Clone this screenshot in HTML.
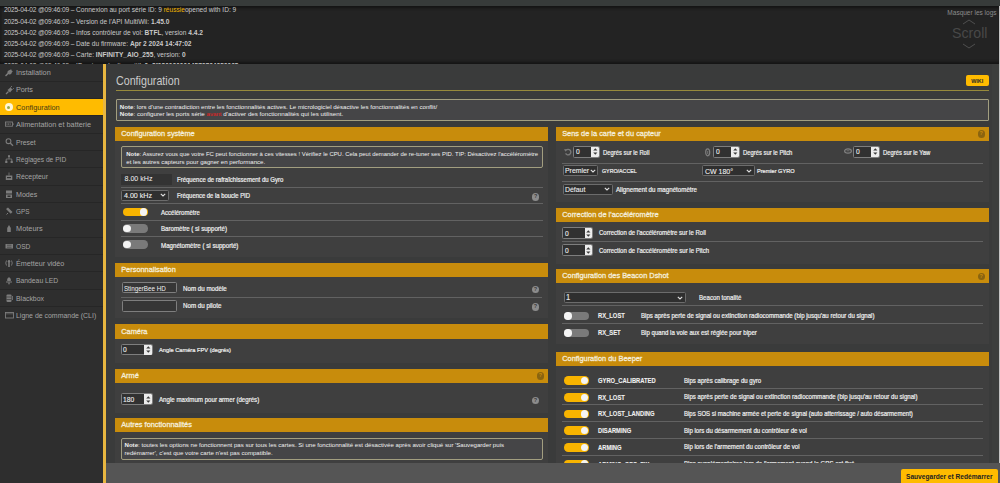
<!DOCTYPE html><html><head><meta charset="utf-8"><style>
html,body{margin:0;padding:0;width:1000px;height:483px;overflow:hidden;background:#3a3b3b;font-family:"Liberation Sans",sans-serif;}
div{position:absolute;box-sizing:border-box;}
.t{white-space:pre;}
</style></head><body>
<div style="left:0px;top:0px;width:1000px;height:6px;background:#373b3a;"></div>
<div style="left:0px;top:6px;width:1000px;height:57.5px;background:#232323;box-shadow:inset 0 3px 3px -1px #141414, inset 0 -3px 3px -1px #141414"></div>
<div style="left:0;top:6px;width:1000px;height:57.5px;overflow:hidden">
<div class="t" style="left:4px;top:0.40px;font-size:6.6px;line-height:8px;color:#c9c9c9"><span style="letter-spacing:-0.14px">2025-04-02 @09:46:09 – </span>Connexion au port série ID: 9 <span style="color:#f0b400">réussie</span>opened with ID: 9</div>
<div class="t" style="left:4px;top:11.50px;font-size:6.6px;line-height:8px;color:#c9c9c9"><span style="letter-spacing:-0.14px">2025-04-02 @09:46:09 – </span>Version de l'API MultiWii: <b>1.45.0</b></div>
<div class="t" style="left:4px;top:22.60px;font-size:6.6px;line-height:8px;color:#c9c9c9"><span style="letter-spacing:-0.14px">2025-04-02 @09:46:09 – </span>Infos contrôleur de vol: <b>BTFL</b>, version <b>4.4.2</b></div>
<div class="t" style="left:4px;top:33.70px;font-size:6.6px;line-height:8px;color:#c9c9c9"><span style="letter-spacing:-0.14px">2025-04-02 @09:46:09 – </span>Date du firmware: <b>Apr 2 2024 14:47:02</b></div>
<div class="t" style="left:4px;top:44.80px;font-size:6.6px;line-height:8px;color:#c9c9c9"><span style="letter-spacing:-0.14px">2025-04-02 @09:46:09 – </span>Carte: <b>INFINITY_AIO_255</b>, version: <b>0</b></div>
<div class="t" style="left:4px;top:55.90px;font-size:6.6px;line-height:8px;color:#c9c9c9"><span style="letter-spacing:-0.14px">2025-04-02 @09:46:09 – </span>ID unique du dispositif: <b>0x8f0800300014573734353035</b></div>
</div>
<div class="t" style="left:940px;top:8.70px;font-size:6.500px;line-height:7.800px;color:#8c8c8c;font-weight:normal;width:56.5px;text-align:right">Masquer les logs</div>
<div class="t" style="left:952px;top:24.68px;font-size:14.200px;line-height:17.040px;color:#484848;font-weight:normal;">Scroll</div>
<svg style="position:absolute;left:962px;top:19px" width="14" height="6"><polyline points="1,5 7,1 13,5" fill="none" stroke="#4f4f4f" stroke-width="1"/></svg>
<svg style="position:absolute;left:962px;top:43px" width="14" height="6"><polyline points="1,1 7,5 13,1" fill="none" stroke="#4f4f4f" stroke-width="1"/></svg>
<div style="left:0px;top:63.5px;width:103px;height:420px;background:#2e2e2e;"></div>
<div class="t" style="left:16px;top:69.11px;font-size:7.260px;line-height:8.712px;color:#a4a4a4;font-weight:normal;">Installation</div>
<svg style="position:absolute;left:3.5px;top:67.47px" width="10" height="10" viewBox="0 0 10 10"><path d="M2,8.5 L6,4.5" stroke="#7c7c7c" stroke-width="1.6" stroke-linecap="round"/><path d="M5.2,3.2 A2.2,2.2 0 1 0 7.8,5.6 L8.8,4.2 L7.6,3.6 L7.2,2.2 Z" fill="#7c7c7c"/></svg>
<div style="left:0px;top:80.63px;width:103px;height:1px;background:#262626;"></div>
<div class="t" style="left:16px;top:86.45px;font-size:7.240px;line-height:8.688px;color:#a4a4a4;font-weight:normal;">Ports</div>
<svg style="position:absolute;left:3.5px;top:84.79px" width="10" height="10" viewBox="0 0 10 10"><path d="M2,9 L4.5,6.5" stroke="#7c7c7c" stroke-width="1.2"/><path d="M3.5,5 L6.5,2.5 L8.5,4.5 L6,7.5 Z" fill="#7c7c7c"/><path d="M6.5,2.5 L8,1 M8.5,4.5 L9.8,3.2" stroke="#7c7c7c" stroke-width="0.9"/></svg>
<div style="left:0px;top:98.46px;width:103px;height:17.33px;background:#ffbb00;"></div>
<div style="left:0px;top:97.96px;width:103px;height:1px;background:#262626;"></div>
<div class="t" style="left:16px;top:103.72px;font-size:7.350px;line-height:8.820px;color:#4a3a12;font-weight:normal;">Configuration</div>
<div style="left:4.7px;top:103.12px;width:8px;height:8px;border-radius:50%;background:#fff7d6"></div>
<div style="left:7.2px;top:105.62px;width:3px;height:3px;border-radius:50%;background:#9aa84a"></div>
<div style="left:0px;top:115.28999999999999px;width:103px;height:1px;background:#262626;"></div>
<div class="t" style="left:16px;top:121.06px;font-size:7.330px;line-height:8.796px;color:#a4a4a4;font-weight:normal;">Alimentation et batterie</div>
<svg style="position:absolute;left:3.5px;top:119.45px" width="10" height="10" viewBox="0 0 10 10"><rect x="1.5" y="3" width="7" height="4.2" fill="none" stroke="#7c7c7c" stroke-width="0.9"/><rect x="8.5" y="4.2" width="1" height="1.8" fill="#7c7c7c"/><path d="M3,4.2 v1.8 M4.6,4.2 v1.8 M6.2,4.2 v1.8" stroke="#7c7c7c" stroke-width="0.7"/></svg>
<div style="left:0px;top:132.62px;width:103px;height:1px;background:#262626;"></div>
<div class="t" style="left:16px;top:138.72px;font-size:6.780px;line-height:8.136px;color:#a4a4a4;font-weight:normal;">Preset</div>
<svg style="position:absolute;left:3.5px;top:136.78px" width="10" height="10" viewBox="0 0 10 10"><circle cx="4.5" cy="4.2" r="2.4" fill="none" stroke="#7c7c7c" stroke-width="1.1"/><path d="M6.2,6 L9,8.8" stroke="#7c7c7c" stroke-width="1.4"/></svg>
<div style="left:0px;top:149.95px;width:103px;height:1px;background:#262626;"></div>
<div class="t" style="left:16px;top:156.12px;font-size:6.650px;line-height:7.980px;color:#a4a4a4;font-weight:normal;">Réglages de PID</div>
<svg style="position:absolute;left:3.5px;top:154.11px" width="10" height="10" viewBox="0 0 10 10"><rect x="4" y="1.2" width="2" height="2" fill="#7c7c7c"/><path d="M5,3 v2 M2.2,7 v-2 h5.6 v2" fill="none" stroke="#7c7c7c" stroke-width="0.8"/><rect x="1.2" y="6.8" width="2.2" height="2.2" fill="#7c7c7c"/><rect x="6.6" y="6.8" width="2.2" height="2.2" fill="#7c7c7c"/></svg>
<div style="left:0px;top:167.27999999999997px;width:103px;height:1px;background:#262626;"></div>
<div class="t" style="left:16px;top:173.29px;font-size:6.930px;line-height:8.316px;color:#a4a4a4;font-weight:normal;">Récepteur</div>
<svg style="position:absolute;left:3.5px;top:171.44px" width="10" height="10" viewBox="0 0 10 10"><rect x="1.8" y="4.5" width="6.5" height="4.5" fill="#7c7c7c"/><path d="M5,4.5 v-3" stroke="#7c7c7c" stroke-width="0.8"/><rect x="3" y="6" width="4" height="1.2" fill="#2e2e2e"/></svg>
<div style="left:0px;top:184.60999999999999px;width:103px;height:1px;background:#262626;"></div>
<div class="t" style="left:16px;top:190.52px;font-size:7.090px;line-height:8.508px;color:#a4a4a4;font-weight:normal;">Modes</div>
<svg style="position:absolute;left:3.5px;top:188.77px" width="10" height="10" viewBox="0 0 10 10"><rect x="2" y="1.5" width="6" height="3" fill="#7c7c7c"/><rect x="2" y="5.5" width="6" height="3.5" fill="#7c7c7c"/><rect x="3.5" y="6.5" width="3" height="1.5" fill="#2e2e2e"/></svg>
<div style="left:0px;top:201.94px;width:103px;height:1px;background:#262626;"></div>
<div class="t" style="left:16px;top:208.26px;font-size:6.400px;line-height:7.680px;color:#a4a4a4;font-weight:normal;">GPS</div>
<svg style="position:absolute;left:3.5px;top:206.10px" width="10" height="10" viewBox="0 0 10 10"><path d="M2,3 L4,1.5 L8.5,6 L6.8,7.8 Z" fill="#7c7c7c"/><path d="M2.5,8.5 L4,7" stroke="#7c7c7c" stroke-width="1"/></svg>
<div style="left:0px;top:219.26999999999998px;width:103px;height:1px;background:#262626;"></div>
<div class="t" style="left:16px;top:225.00px;font-size:7.390px;line-height:8.868px;color:#a4a4a4;font-weight:normal;">Moteurs</div>
<svg style="position:absolute;left:3.5px;top:223.43px" width="10" height="10" viewBox="0 0 10 10"><path d="M3.2,9 L3.2,5 L5,2 L6.8,5 L6.8,9 Z" fill="#7c7c7c"/></svg>
<div style="left:0px;top:236.59999999999997px;width:103px;height:1px;background:#262626;"></div>
<div class="t" style="left:16px;top:242.80px;font-size:6.600px;line-height:7.920px;color:#a4a4a4;font-weight:normal;">OSD</div>
<svg style="position:absolute;left:3.5px;top:240.76px" width="10" height="10" viewBox="0 0 10 10"><rect x="1.5" y="3" width="7.5" height="4.5" fill="#7c7c7c"/><path d="M3,4.2 h4.5 M3,6.2 h4.5" stroke="#2e2e2e" stroke-width="0.6"/></svg>
<div style="left:0px;top:253.93px;width:103px;height:1px;background:#262626;"></div>
<div class="t" style="left:16px;top:259.78px;font-size:7.190px;line-height:8.628px;color:#a4a4a4;font-weight:normal;">Émetteur vidéo</div>
<svg style="position:absolute;left:3.5px;top:258.10px" width="10" height="10" viewBox="0 0 10 10"><path d="M2.5,2.5 Q1,5 2.5,7.5 M7.5,2.5 Q9,5 7.5,7.5" fill="none" stroke="#7c7c7c" stroke-width="0.9"/><rect x="4.2" y="3" width="1.6" height="6" fill="#7c7c7c"/><circle cx="5" cy="3.2" r="1.2" fill="#7c7c7c"/></svg>
<div style="left:0px;top:271.26px;width:103px;height:1px;background:#262626;"></div>
<div class="t" style="left:16px;top:277.35px;font-size:6.790px;line-height:8.148px;color:#a4a4a4;font-weight:normal;">Bandeau LED</div>
<svg style="position:absolute;left:3.5px;top:275.43px" width="10" height="10" viewBox="0 0 10 10"><path d="M3.2,6 L3.2,4 Q5,0.5 6.8,4 L6.8,6 Z" fill="#7c7c7c"/><rect x="2" y="6.5" width="6" height="1" fill="#7c7c7c"/><rect x="4.3" y="7.5" width="1.4" height="1.8" fill="#7c7c7c"/></svg>
<div style="left:0px;top:288.59px;width:103px;height:1px;background:#262626;"></div>
<div class="t" style="left:16px;top:294.62px;font-size:6.900px;line-height:8.280px;color:#a4a4a4;font-weight:normal;">Blackbox</div>
<svg style="position:absolute;left:3.5px;top:292.75px" width="10" height="10" viewBox="0 0 10 10"><rect x="2.5" y="1.5" width="5" height="7.5" rx="1" fill="#7c7c7c"/><path d="M2.5,4 h5 M2.5,6.5 h5" stroke="#2e2e2e" stroke-width="0.6"/><rect x="8.2" y="3" width="0.8" height="4" fill="#7c7c7c"/></svg>
<div style="left:0px;top:305.91999999999996px;width:103px;height:1px;background:#262626;"></div>
<div class="t" style="left:16px;top:311.92px;font-size:6.940px;line-height:8.328px;color:#a4a4a4;font-weight:normal;">Ligne de commande (CLI)</div>
<svg style="position:absolute;left:3.5px;top:310.08px" width="10" height="10" viewBox="0 0 10 10"><rect x="1.5" y="2.5" width="8" height="5.5" fill="none" stroke="#7c7c7c" stroke-width="0.9"/><path d="M1.5,3.8 h8" stroke="#7c7c7c" stroke-width="0.6"/></svg>
<div style="left:103px;top:63.5px;width:3px;height:420px;background:#e8b640;"></div>
<div style="left:992px;top:63.5px;width:6.5px;height:400px;background:#3c3e3d;"></div>
<div style="left:998.5px;top:6px;width:1.5px;height:457px;background:#c4c4c4;"></div>
<div class="t" style="left:116px;top:74.58px;font-size:10.700px;line-height:12.840px;color:#cacaca;font-weight:normal;transform:scaleY(1.12);transform-origin:0 50%">Configuration</div>
<div style="left:116px;top:90px;width:873px;height:1.2px;background:#978a3c;"></div>
<div style="left:965.5px;top:75px;width:23.5px;height:11.2px;background:#ffbb00;border-radius:2px"></div>
<div class="t" style="left:965.5px;top:77.56px;font-size:5.400px;line-height:6.480px;color:#2a2a2a;font-weight:bold;width:23.5px;text-align:center">WIKI</div>
<div style="left:116px;top:99.3px;width:873px;height:21.3px;background:#454547;border:1px solid #a29e80;border-radius:1px"></div>
<div class="t" style="left:119.8px;top:102.53px;font-size:6.120px;line-height:7.344px;color:#f0f0f0;font-weight:normal;"><b>Note</b>: lors d'une contradiction entre les fonctionnalités actives. Le micrologiciel désactive les fonctionnalités en conflit/</div>
<div class="t" style="left:119.8px;top:110.48px;font-size:6.200px;line-height:7.440px;color:#f0f0f0;font-weight:normal;"><b>Note</b>: configurer les ports série <span style="color:#e82020">avant</span> d'activer des fonctionnalités qui les utilisent.</div>
<div style="left:115.4px;top:141.1px;width:432.6px;height:116.4px;background:#3f3f3f;"></div>
<div style="left:115.4px;top:126.8px;width:432.6px;height:14.299999999999997px;background:#c88c0c;"></div>
<div class="t" style="left:121.2px;top:130.21px;font-size:7.400px;line-height:8.880px;color:#f4ecd8;font-weight:normal;-webkit-text-stroke:0.3px #f4ecd8;">Configuration système</div>
<div style="left:121.1px;top:146.3px;width:421.5px;height:21.8px;background:#454547;border:1px solid #a29e80;border-radius:2px"></div>
<div class="t" style="left:126.3px;top:150.84px;font-size:5.930px;line-height:7.116px;color:#f0f0f0;font-weight:normal;"><b>Note</b>: Assurez vous que votre FC peut fonctionner à ces vitesses ! Vérifiez le CPU. Cela peut demander de re-tuner ses PID. TIP: Désactivez l'accéléromètre</div>
<div class="t" style="left:126.3px;top:158.04px;font-size:6.100px;line-height:7.320px;color:#f0f0f0;font-weight:normal;">et les autres capteurs pour gagner en performance.</div>
<div style="left:121.3px;top:174px;width:51.2px;height:10.5px;background:#333333;"></div>
<div class="t" style="left:124.5px;top:174.94px;font-size:7.100px;line-height:8.520px;color:#f4f4f4;font-weight:normal;">8.00 kHz</div>
<div class="t" style="left:177.2px;top:175.89px;font-size:6.512px;line-height:7.815px;color:#f0f0f0;font-weight:normal;transform:scaleX(0.9259);transform-origin:0 50%;-webkit-text-stroke:0.2px #f0f0f0;">Fréquence de rafraîchissement du Gyro</div>
<div style="left:121px;top:186.5px;width:422px;height:1px;background:#626262;"></div>
<div style="left:121.3px;top:189.70px;width:47.5px;height:11px;background:#2f2f2f;border:1px solid #6c6c6c;border-radius:1.5px"></div>
<div class="t" style="left:123.6px;top:191.30px;font-size:7.668px;line-height:9.202px;color:#f0f0f0;font-weight:normal;transform:scaleX(0.9259);transform-origin:0 50%;-webkit-text-stroke:0.1px #f0f0f0;">4.00 kHz</div>
<svg style="position:absolute;left:159.80px;top:193.20px" width="6" height="4"><polyline points="0.8,0.8 3,3 5.2,0.8" fill="none" stroke="#e0e0e0" stroke-width="1.1"/></svg>
<div class="t" style="left:177.2px;top:191.98px;font-size:6.372px;line-height:7.646px;color:#f0f0f0;font-weight:normal;transform:scaleX(0.9259);transform-origin:0 50%;-webkit-text-stroke:0.2px #f0f0f0;">Fréquence de la boucle PID</div>
<div style="left:532.10px;top:193.40px;width:7.2px;height:7.2px;border-radius:50%;background:#8c8c8c"></div>
<div class="t" style="left:532.10px;top:193.40px;width:7.2px;height:7.2px;font-size:5.5px;line-height:7.2px;text-align:center;font-weight:bold;color:#3a3a3a">?</div>
<div style="left:121px;top:202.7px;width:422px;height:1px;background:#626262;"></div>
<div style="left:122.8px;top:207.75px;width:25px;height:8.5px;border-radius:4.25px;background:#f8b400"></div>
<div style="left:139.80px;top:208.25px;width:7.5px;height:7.5px;border-radius:50%;background:#f4f4f4"></div>
<div class="t" style="left:160.9px;top:209.00px;font-size:6.502px;line-height:7.802px;color:#f0f0f0;font-weight:normal;transform:scaleX(0.9259);transform-origin:0 50%;-webkit-text-stroke:0.2px #f0f0f0;">Accéléromètre</div>
<div style="left:121px;top:219.8px;width:422px;height:1px;background:#626262;"></div>
<div style="left:122.8px;top:224.15px;width:25px;height:8.5px;border-radius:4.25px;background:#7a7a7a"></div>
<div style="left:123.30px;top:224.65px;width:7.5px;height:7.5px;border-radius:50%;background:#f4f4f4"></div>
<div class="t" style="left:160.9px;top:225.23px;font-size:6.620px;line-height:7.944px;color:#f0f0f0;font-weight:normal;transform:scaleX(0.9259);transform-origin:0 50%;-webkit-text-stroke:0.2px #f0f0f0;">Baromètre ( si supporté)</div>
<div style="left:121px;top:235.8px;width:422px;height:1px;background:#626262;"></div>
<div style="left:122.8px;top:240.45px;width:25px;height:8.5px;border-radius:4.25px;background:#7a7a7a"></div>
<div style="left:123.30px;top:240.95px;width:7.5px;height:7.5px;border-radius:50%;background:#f4f4f4"></div>
<div class="t" style="left:160.9px;top:241.50px;font-size:6.674px;line-height:8.009px;color:#f0f0f0;font-weight:normal;transform:scaleX(0.9259);transform-origin:0 50%;-webkit-text-stroke:0.2px #f0f0f0;">Magnétomètre ( si supporté)</div>
<div style="left:115.4px;top:277.2px;width:432.6px;height:41.10000000000002px;background:#3f3f3f;"></div>
<div style="left:115.4px;top:262.7px;width:432.6px;height:14.5px;background:#c88c0c;"></div>
<div class="t" style="left:121.2px;top:266.21px;font-size:7.400px;line-height:8.880px;color:#f4ecd8;font-weight:normal;-webkit-text-stroke:0.3px #f4ecd8;">Personnalisation</div>
<div style="left:121.5px;top:282.10px;width:55.6px;height:11.4px;background:#363636;border:1px solid #7e7e7e;border-radius:1.5px"></div>
<div class="t" style="left:123.9px;top:284.52px;font-size:6.300px;line-height:7.560px;color:#f0f0f0;font-weight:normal;">StingerBee HD</div>
<div class="t" style="left:182.6px;top:284.58px;font-size:6.696px;line-height:8.035px;color:#f0f0f0;font-weight:normal;transform:scaleX(0.9259);transform-origin:0 50%;-webkit-text-stroke:0.2px #f0f0f0;">Nom du modèle</div>
<div style="left:531.80px;top:286.10px;width:7.2px;height:7.2px;border-radius:50%;background:#8c8c8c"></div>
<div class="t" style="left:531.80px;top:286.10px;width:7.2px;height:7.2px;font-size:5.5px;line-height:7.2px;text-align:center;font-weight:bold;color:#3a3a3a">?</div>
<div style="left:121px;top:296.9px;width:421px;height:1px;background:#626262;"></div>
<div style="left:121.5px;top:300.20px;width:55.6px;height:11.4px;background:#363636;border:1px solid #7e7e7e;border-radius:1.5px"></div>
<div class="t" style="left:182.6px;top:301.76px;font-size:6.739px;line-height:8.087px;color:#f0f0f0;font-weight:normal;transform:scaleX(0.9259);transform-origin:0 50%;-webkit-text-stroke:0.2px #f0f0f0;">Nom du pilote</div>
<div style="left:531.80px;top:303.40px;width:7.2px;height:7.2px;border-radius:50%;background:#8c8c8c"></div>
<div class="t" style="left:531.80px;top:303.40px;width:7.2px;height:7.2px;font-size:5.5px;line-height:7.2px;text-align:center;font-weight:bold;color:#3a3a3a">?</div>
<div style="left:115.4px;top:338.6px;width:432.6px;height:24.69999999999999px;background:#3f3f3f;"></div>
<div style="left:115.4px;top:324.1px;width:432.6px;height:14.5px;background:#c88c0c;"></div>
<div class="t" style="left:121.2px;top:327.61px;font-size:7.400px;line-height:8.880px;color:#f4ecd8;font-weight:normal;-webkit-text-stroke:0.3px #f4ecd8;">Caméra</div>
<div style="left:121px;top:344.00px;width:31.7px;height:11.4px;background:#313131;border:1px solid #7e7e7e;border-radius:1.5px"></div>
<div class="t" style="left:123.2px;top:346.28px;font-size:7.035px;line-height:8.442px;color:#f4f4f4;font-weight:normal;transform:scaleX(0.9524);transform-origin:0 50%;-webkit-text-stroke:0.1px #f4f4f4;">0</div>
<div style="left:144.10px;top:344.80px;width:7.8px;height:9.8px;background:#ececec;border-radius:0 1px 1px 0"></div>
<svg style="position:absolute;left:145.70px;top:345.20px" width="5" height="9" viewBox="0 0 5 9"><polygon points="0.2,3.6 2.3,1.2 4.4,3.6" fill="#3a3a3a"/><polygon points="0.2,5.4 2.3,7.8 4.4,5.4" fill="#3a3a3a"/></svg>
<div class="t" style="left:158.8px;top:346.49px;font-size:6.178px;line-height:7.413px;color:#f0f0f0;font-weight:normal;transform:scaleX(0.9259);transform-origin:0 50%;-webkit-text-stroke:0.2px #f0f0f0;">Angle Caméra FPV (degrés)</div>
<div style="left:115.4px;top:383px;width:432.6px;height:30px;background:#3f3f3f;"></div>
<div style="left:115.4px;top:369px;width:432.6px;height:14px;background:#c88c0c;"></div>
<div class="t" style="left:121.2px;top:372.26px;font-size:7.400px;line-height:8.880px;color:#f4ecd8;font-weight:normal;-webkit-text-stroke:0.3px #f4ecd8;">Armé</div>
<div style="left:536.90px;top:372.40px;width:7.2px;height:7.2px;border-radius:50%;background:#8a6410"></div>
<div class="t" style="left:536.90px;top:372.40px;width:7.2px;height:7.2px;font-size:5.5px;line-height:7.2px;text-align:center;font-weight:bold;color:#c88c0c">?</div>
<div style="left:121px;top:393.30px;width:31.7px;height:11.4px;background:#313131;border:1px solid #7e7e7e;border-radius:1.5px"></div>
<div class="t" style="left:123.2px;top:395.58px;font-size:7.035px;line-height:8.442px;color:#f4f4f4;font-weight:normal;transform:scaleX(0.9524);transform-origin:0 50%;-webkit-text-stroke:0.1px #f4f4f4;">180</div>
<div style="left:144.10px;top:394.10px;width:7.8px;height:9.8px;background:#ececec;border-radius:0 1px 1px 0"></div>
<svg style="position:absolute;left:145.70px;top:394.50px" width="5" height="9" viewBox="0 0 5 9"><polygon points="0.2,3.6 2.3,1.2 4.4,3.6" fill="#3a3a3a"/><polygon points="0.2,5.4 2.3,7.8 4.4,5.4" fill="#3a3a3a"/></svg>
<div class="t" style="left:158.8px;top:395.61px;font-size:6.642px;line-height:7.970px;color:#f0f0f0;font-weight:normal;transform:scaleX(0.9259);transform-origin:0 50%;-webkit-text-stroke:0.2px #f0f0f0;">Angle maximum pour armer (degrés)</div>
<div style="left:531.80px;top:397.20px;width:7.2px;height:7.2px;border-radius:50%;background:#8c8c8c"></div>
<div class="t" style="left:531.80px;top:397.20px;width:7.2px;height:7.2px;font-size:5.5px;line-height:7.2px;text-align:center;font-weight:bold;color:#3a3a3a">?</div>
<div style="left:115.4px;top:432.3px;width:432.6px;height:37.69999999999999px;background:#3f3f3f;"></div>
<div style="left:115.4px;top:417.8px;width:432.6px;height:14.5px;background:#c88c0c;"></div>
<div class="t" style="left:121.2px;top:421.31px;font-size:7.400px;line-height:8.880px;color:#f4ecd8;font-weight:normal;-webkit-text-stroke:0.3px #f4ecd8;">Autres fonctionnalités</div>
<div style="left:121.1px;top:437.8px;width:422px;height:21.9px;background:#454547;border:1px solid #a29e80;border-radius:2px"></div>
<div class="t" style="left:124.5px;top:441.14px;font-size:6.100px;line-height:7.320px;color:#f0f0f0;font-weight:normal;"><b>Note</b>: toutes les options ne fonctionnent pas sur tous les cartes. Si une fonctionnalité est désactivée après avoir cliqué sur 'Sauvegarder puis</div>
<div class="t" style="left:124.5px;top:449.14px;font-size:6.100px;line-height:7.320px;color:#f0f0f0;font-weight:normal;">redémarrer', c'est que votre carte n'est pas compatible.</div>
<div style="left:556.4px;top:141.1px;width:432.30000000000007px;height:61.20000000000002px;background:#3f3f3f;"></div>
<div style="left:556.4px;top:126.8px;width:432.30000000000007px;height:14.299999999999997px;background:#c88c0c;"></div>
<div class="t" style="left:562.1999999999999px;top:130.21px;font-size:7.400px;line-height:8.880px;color:#f4ecd8;font-weight:normal;-webkit-text-stroke:0.3px #f4ecd8;">Sens de la carte et du capteur</div>
<div style="left:977.60px;top:130.35px;width:7.2px;height:7.2px;border-radius:50%;background:#8a6410"></div>
<div class="t" style="left:977.60px;top:130.35px;width:7.2px;height:7.2px;font-size:5.5px;line-height:7.2px;text-align:center;font-weight:bold;color:#c88c0c">?</div>
<svg style="position:absolute;left:563.80px;top:147.5px" width="8" height="8" viewBox="0 0 8 8"><path d="M2,2.2 A2.8,2.8 0 1 1 1.6,5.4" fill="none" stroke="#7a7a7a" stroke-width="1.3"/><polygon points="0.2,1 3.2,1.4 1.2,3.8" fill="#7a7a7a"/></svg>
<div style="left:573.4px;top:146.20px;width:26.3px;height:11.4px;background:#313131;border:1px solid #7e7e7e;border-radius:1.5px"></div>
<div class="t" style="left:575.6px;top:148.48px;font-size:7.035px;line-height:8.442px;color:#f4f4f4;font-weight:normal;transform:scaleX(0.9524);transform-origin:0 50%;-webkit-text-stroke:0.1px #f4f4f4;">0</div>
<div style="left:591.10px;top:147.00px;width:7.8px;height:9.8px;background:#ececec;border-radius:0 1px 1px 0"></div>
<svg style="position:absolute;left:592.70px;top:147.40px" width="5" height="9" viewBox="0 0 5 9"><polygon points="0.2,3.6 2.3,1.2 4.4,3.6" fill="#3a3a3a"/><polygon points="0.2,5.4 2.3,7.8 4.4,5.4" fill="#3a3a3a"/></svg>
<div class="t" style="left:602.8px;top:148.50px;font-size:6.329px;line-height:7.595px;color:#f0f0f0;font-weight:normal;transform:scaleX(0.9259);transform-origin:0 50%;-webkit-text-stroke:0.2px #f0f0f0;">Degrés sur le Roll</div>
<svg style="position:absolute;left:705.20px;top:147.5px" width="6" height="9" viewBox="0 0 6 9"><ellipse cx="2.7" cy="4.3" rx="2.0" ry="3.5" fill="none" stroke="#808080" stroke-width="1.2"/><path d="M2.7,3 v3" stroke="#808080" stroke-width="0.8"/></svg>
<div style="left:713.4px;top:146.20px;width:26.3px;height:11.4px;background:#313131;border:1px solid #7e7e7e;border-radius:1.5px"></div>
<div class="t" style="left:715.6px;top:148.48px;font-size:7.035px;line-height:8.442px;color:#f4f4f4;font-weight:normal;transform:scaleX(0.9524);transform-origin:0 50%;-webkit-text-stroke:0.1px #f4f4f4;">0</div>
<div style="left:731.10px;top:147.00px;width:7.8px;height:9.8px;background:#ececec;border-radius:0 1px 1px 0"></div>
<svg style="position:absolute;left:732.70px;top:147.40px" width="5" height="9" viewBox="0 0 5 9"><polygon points="0.2,3.6 2.3,1.2 4.4,3.6" fill="#3a3a3a"/><polygon points="0.2,5.4 2.3,7.8 4.4,5.4" fill="#3a3a3a"/></svg>
<div class="t" style="left:742.8px;top:148.50px;font-size:6.329px;line-height:7.595px;color:#f0f0f0;font-weight:normal;transform:scaleX(0.9259);transform-origin:0 50%;-webkit-text-stroke:0.2px #f0f0f0;">Degrés sur le Pitch</div>
<svg style="position:absolute;left:843.80px;top:148px" width="9" height="6" viewBox="0 0 9 6"><ellipse cx="4" cy="3" rx="3.4" ry="2.1" fill="none" stroke="#808080" stroke-width="1.2"/><path d="M2.5,2.8 h3" stroke="#808080" stroke-width="0.8"/></svg>
<div style="left:853.4px;top:146.20px;width:26.3px;height:11.4px;background:#313131;border:1px solid #7e7e7e;border-radius:1.5px"></div>
<div class="t" style="left:855.6px;top:148.48px;font-size:7.035px;line-height:8.442px;color:#f4f4f4;font-weight:normal;transform:scaleX(0.9524);transform-origin:0 50%;-webkit-text-stroke:0.1px #f4f4f4;">0</div>
<div style="left:871.10px;top:147.00px;width:7.8px;height:9.8px;background:#ececec;border-radius:0 1px 1px 0"></div>
<svg style="position:absolute;left:872.70px;top:147.40px" width="5" height="9" viewBox="0 0 5 9"><polygon points="0.2,3.6 2.3,1.2 4.4,3.6" fill="#3a3a3a"/><polygon points="0.2,5.4 2.3,7.8 4.4,5.4" fill="#3a3a3a"/></svg>
<div class="t" style="left:882.8px;top:148.50px;font-size:6.329px;line-height:7.595px;color:#f0f0f0;font-weight:normal;transform:scaleX(0.9259);transform-origin:0 50%;-webkit-text-stroke:0.2px #f0f0f0;">Degrés sur le Yaw</div>
<div style="left:561.8px;top:162.7px;width:421.70000000000005px;height:1px;background:#626262;"></div>
<div style="left:562.7px;top:165.40px;width:35.8px;height:11px;background:#2f2f2f;border:1px solid #6c6c6c;border-radius:1.5px"></div>
<div class="t" style="left:565.0px;top:167.13px;font-size:7.452px;line-height:8.942px;color:#f0f0f0;font-weight:normal;transform:scaleX(0.9259);transform-origin:0 50%;-webkit-text-stroke:0.1px #f0f0f0;">Premier</div>
<svg style="position:absolute;left:589.50px;top:168.90px" width="6" height="4"><polyline points="0.8,0.8 3,3 5.2,0.8" fill="none" stroke="#e0e0e0" stroke-width="1.1"/></svg>
<div class="t" style="left:602px;top:168.27px;font-size:5.724px;line-height:6.869px;color:#f0f0f0;font-weight:normal;transform:scaleX(0.9259);transform-origin:0 50%;-webkit-text-stroke:0.2px #f0f0f0;">GYRO/ACCEL</div>
<div style="left:702.4px;top:165.40px;width:52.2px;height:11px;background:#2f2f2f;border:1px solid #6c6c6c;border-radius:1.5px"></div>
<div class="t" style="left:704.6999999999999px;top:167.06px;font-size:7.560px;line-height:9.072px;color:#f0f0f0;font-weight:normal;transform:scaleX(0.9259);transform-origin:0 50%;-webkit-text-stroke:0.1px #f0f0f0;">CW 180°</div>
<svg style="position:absolute;left:745.60px;top:168.90px" width="6" height="4"><polyline points="0.8,0.8 3,3 5.2,0.8" fill="none" stroke="#e0e0e0" stroke-width="1.1"/></svg>
<div class="t" style="left:756.8px;top:168.07px;font-size:6.048px;line-height:7.258px;color:#f0f0f0;font-weight:normal;transform:scaleX(0.9259);transform-origin:0 50%;-webkit-text-stroke:0.2px #f0f0f0;">Premier GYRO</div>
<div style="left:561.8px;top:181.1px;width:421.70000000000005px;height:1px;background:#626262;"></div>
<div style="left:562.7px;top:183.80px;width:50.7px;height:11px;background:#2f2f2f;border:1px solid #6c6c6c;border-radius:1.5px"></div>
<div class="t" style="left:565.0px;top:185.53px;font-size:7.452px;line-height:8.942px;color:#f0f0f0;font-weight:normal;transform:scaleX(0.9259);transform-origin:0 50%;-webkit-text-stroke:0.1px #f0f0f0;">Défaut</div>
<svg style="position:absolute;left:604.40px;top:187.30px" width="6" height="4"><polyline points="0.8,0.8 3,3 5.2,0.8" fill="none" stroke="#e0e0e0" stroke-width="1.1"/></svg>
<div class="t" style="left:616.4px;top:185.89px;font-size:6.685px;line-height:8.022px;color:#f0f0f0;font-weight:normal;transform:scaleX(0.9259);transform-origin:0 50%;-webkit-text-stroke:0.2px #f0f0f0;">Alignement du magnétomètre</div>
<div style="left:556.4px;top:222px;width:432.30000000000007px;height:41.5px;background:#3f3f3f;"></div>
<div style="left:556.4px;top:207.9px;width:432.30000000000007px;height:14.099999999999994px;background:#c88c0c;"></div>
<div class="t" style="left:562.1999999999999px;top:211.21px;font-size:7.400px;line-height:8.880px;color:#f4ecd8;font-weight:normal;-webkit-text-stroke:0.3px #f4ecd8;">Correction de l'accéléromètre</div>
<div style="left:562.4px;top:227.40px;width:30.7px;height:11.4px;background:#313131;border:1px solid #7e7e7e;border-radius:1.5px"></div>
<div class="t" style="left:564.6px;top:229.68px;font-size:7.035px;line-height:8.442px;color:#f4f4f4;font-weight:normal;transform:scaleX(0.9524);transform-origin:0 50%;-webkit-text-stroke:0.1px #f4f4f4;">0</div>
<div style="left:584.50px;top:228.20px;width:7.8px;height:9.8px;background:#ececec;border-radius:0 1px 1px 0"></div>
<svg style="position:absolute;left:586.10px;top:228.60px" width="5" height="9" viewBox="0 0 5 9"><polygon points="0.2,3.6 2.3,1.2 4.4,3.6" fill="#3a3a3a"/><polygon points="0.2,5.4 2.3,7.8 4.4,5.4" fill="#3a3a3a"/></svg>
<div class="t" style="left:599.2px;top:229.49px;font-size:6.512px;line-height:7.815px;color:#f0f0f0;font-weight:normal;transform:scaleX(0.9259);transform-origin:0 50%;-webkit-text-stroke:0.2px #f0f0f0;">Correction de l'accéléromètre sur le Roll</div>
<div style="left:561.8px;top:240.9px;width:421.70000000000005px;height:1px;background:#626262;"></div>
<div style="left:562.4px;top:244.40px;width:30.7px;height:11.4px;background:#313131;border:1px solid #7e7e7e;border-radius:1.5px"></div>
<div class="t" style="left:564.6px;top:246.68px;font-size:7.035px;line-height:8.442px;color:#f4f4f4;font-weight:normal;transform:scaleX(0.9524);transform-origin:0 50%;-webkit-text-stroke:0.1px #f4f4f4;">0</div>
<div style="left:584.50px;top:245.20px;width:7.8px;height:9.8px;background:#ececec;border-radius:0 1px 1px 0"></div>
<svg style="position:absolute;left:586.10px;top:245.60px" width="5" height="9" viewBox="0 0 5 9"><polygon points="0.2,3.6 2.3,1.2 4.4,3.6" fill="#3a3a3a"/><polygon points="0.2,5.4 2.3,7.8 4.4,5.4" fill="#3a3a3a"/></svg>
<div class="t" style="left:599.2px;top:246.88px;font-size:6.534px;line-height:7.841px;color:#f0f0f0;font-weight:normal;transform:scaleX(0.9259);transform-origin:0 50%;-webkit-text-stroke:0.2px #f0f0f0;">Correction de l'accéléromètre sur le Pitch</div>
<div style="left:556.4px;top:283.3px;width:432.30000000000007px;height:60.69999999999999px;background:#3f3f3f;"></div>
<div style="left:556.4px;top:269px;width:432.30000000000007px;height:14.300000000000011px;background:#c88c0c;"></div>
<div class="t" style="left:562.1999999999999px;top:272.41px;font-size:7.400px;line-height:8.880px;color:#f4ecd8;font-weight:normal;-webkit-text-stroke:0.3px #f4ecd8;">Configuration des Beacon Dshot</div>
<div style="left:977.60px;top:272.55px;width:7.2px;height:7.2px;border-radius:50%;background:#8a6410"></div>
<div class="t" style="left:977.60px;top:272.55px;width:7.2px;height:7.2px;font-size:5.5px;line-height:7.2px;text-align:center;font-weight:bold;color:#c88c0c">?</div>
<div style="left:564px;top:292.10px;width:122px;height:11px;background:#2f2f2f;border:1px solid #6c6c6c;border-radius:1.5px"></div>
<div class="t" style="left:566.3px;top:293.38px;font-size:8.208px;line-height:9.850px;color:#f0f0f0;font-weight:normal;transform:scaleX(0.9259);transform-origin:0 50%;-webkit-text-stroke:0.1px #f0f0f0;">1</div>
<svg style="position:absolute;left:677.00px;top:295.60px" width="6" height="4"><polyline points="0.8,0.8 3,3 5.2,0.8" fill="none" stroke="#e0e0e0" stroke-width="1.1"/></svg>
<div class="t" style="left:698.6px;top:294.31px;font-size:6.642px;line-height:7.970px;color:#f0f0f0;font-weight:normal;transform:scaleX(0.9259);transform-origin:0 50%;-webkit-text-stroke:0.2px #f0f0f0;">Beacon tonalité</div>
<div style="left:561.8px;top:304.8px;width:421.70000000000005px;height:1px;background:#626262;"></div>
<div style="left:563.6px;top:311.85px;width:25px;height:8.5px;border-radius:4.25px;background:#7a7a7a"></div>
<div style="left:564.10px;top:312.35px;width:7.5px;height:7.5px;border-radius:50%;background:#f4f4f4"></div>
<div class="t" style="left:597.6px;top:312.12px;font-size:6.635px;line-height:7.962px;color:#f0f0f0;font-weight:bold;transform:scaleX(0.8772);transform-origin:0 50%;-webkit-text-stroke:0.1px #f0f0f0;">RX_LOST</div>
<div class="t" style="left:641.2px;top:311.85px;font-size:6.588px;line-height:7.906px;color:#f0f0f0;font-weight:normal;transform:scaleX(0.9259);transform-origin:0 50%;-webkit-text-stroke:0.2px #f0f0f0;">Bips après perte de signal ou extinction radiocommande (bip jusqu'au retour du signal)</div>
<div style="left:561.8px;top:323.4px;width:421.70000000000005px;height:1px;background:#626262;"></div>
<div style="left:563.6px;top:328.55px;width:25px;height:8.5px;border-radius:4.25px;background:#7a7a7a"></div>
<div style="left:564.10px;top:329.05px;width:7.5px;height:7.5px;border-radius:50%;background:#f4f4f4"></div>
<div class="t" style="left:597.6px;top:328.82px;font-size:6.635px;line-height:7.962px;color:#f0f0f0;font-weight:bold;transform:scaleX(0.8772);transform-origin:0 50%;-webkit-text-stroke:0.1px #f0f0f0;">RX_SET</div>
<div class="t" style="left:641.2px;top:328.55px;font-size:6.588px;line-height:7.906px;color:#f0f0f0;font-weight:normal;transform:scaleX(0.9259);transform-origin:0 50%;-webkit-text-stroke:0.2px #f0f0f0;">Bip quand la voie aux est réglée pour biper</div>
<div style="left:556.4px;top:365.7px;width:432.30000000000007px;height:104.30000000000001px;background:#3f3f3f;"></div>
<div style="left:556.4px;top:352.1px;width:432.30000000000007px;height:13.599999999999966px;background:#c88c0c;"></div>
<div class="t" style="left:562.1999999999999px;top:355.16px;font-size:7.400px;line-height:8.880px;color:#f4ecd8;font-weight:normal;-webkit-text-stroke:0.3px #f4ecd8;">Configuration du Beeper</div>
<div style="left:563.6px;top:376.35px;width:25px;height:8.5px;border-radius:4.25px;background:#f8b400"></div>
<div style="left:580.60px;top:376.85px;width:7.5px;height:7.5px;border-radius:50%;background:#f4f4f4"></div>
<div class="t" style="left:597.6px;top:377.02px;font-size:6.635px;line-height:7.962px;color:#f0f0f0;font-weight:bold;transform:scaleX(0.8772);transform-origin:0 50%;-webkit-text-stroke:0.1px #f0f0f0;">GYRO_CALIBRATED</div>
<div class="t" style="left:683.7px;top:376.55px;font-size:6.588px;line-height:7.906px;color:#f0f0f0;font-weight:normal;transform:scaleX(0.9259);transform-origin:0 50%;-webkit-text-stroke:0.2px #f0f0f0;">Bips après calibrage du gyro</div>
<div style="left:561.8px;top:387.70000000000005px;width:421.70000000000005px;height:1px;background:#626262;"></div>
<div style="left:563.6px;top:393.05px;width:25px;height:8.5px;border-radius:4.25px;background:#f8b400"></div>
<div style="left:580.60px;top:393.55px;width:7.5px;height:7.5px;border-radius:50%;background:#f4f4f4"></div>
<div class="t" style="left:597.6px;top:393.72px;font-size:6.635px;line-height:7.962px;color:#f0f0f0;font-weight:bold;transform:scaleX(0.8772);transform-origin:0 50%;-webkit-text-stroke:0.1px #f0f0f0;">RX_LOST</div>
<div class="t" style="left:683.7px;top:393.25px;font-size:6.588px;line-height:7.906px;color:#f0f0f0;font-weight:normal;transform:scaleX(0.9259);transform-origin:0 50%;-webkit-text-stroke:0.2px #f0f0f0;">Bips après perte de signal ou extinction radiocommande (bip jusqu'au retour du signal)</div>
<div style="left:561.8px;top:404.40000000000003px;width:421.70000000000005px;height:1px;background:#626262;"></div>
<div style="left:563.6px;top:409.75px;width:25px;height:8.5px;border-radius:4.25px;background:#f8b400"></div>
<div style="left:580.60px;top:410.25px;width:7.5px;height:7.5px;border-radius:50%;background:#f4f4f4"></div>
<div class="t" style="left:597.6px;top:410.42px;font-size:6.635px;line-height:7.962px;color:#f0f0f0;font-weight:bold;transform:scaleX(0.8772);transform-origin:0 50%;-webkit-text-stroke:0.1px #f0f0f0;">RX_LOST_LANDING</div>
<div class="t" style="left:683.7px;top:410.00px;font-size:6.502px;line-height:7.802px;color:#f0f0f0;font-weight:normal;transform:scaleX(0.9259);transform-origin:0 50%;-webkit-text-stroke:0.2px #f0f0f0;">Bips SOS si machine armée et perte de signal (auto atterrissage / auto désarmement)</div>
<div style="left:561.8px;top:421.1px;width:421.70000000000005px;height:1px;background:#626262;"></div>
<div style="left:563.6px;top:426.45px;width:25px;height:8.5px;border-radius:4.25px;background:#f8b400"></div>
<div style="left:580.60px;top:426.95px;width:7.5px;height:7.5px;border-radius:50%;background:#f4f4f4"></div>
<div class="t" style="left:597.6px;top:427.12px;font-size:6.635px;line-height:7.962px;color:#f0f0f0;font-weight:bold;transform:scaleX(0.8772);transform-origin:0 50%;-webkit-text-stroke:0.1px #f0f0f0;">DISARMING</div>
<div class="t" style="left:683.7px;top:426.65px;font-size:6.588px;line-height:7.906px;color:#f0f0f0;font-weight:normal;transform:scaleX(0.9259);transform-origin:0 50%;-webkit-text-stroke:0.2px #f0f0f0;">Bip lors du désarmement du contrôleur de vol</div>
<div style="left:561.8px;top:437.80000000000007px;width:421.70000000000005px;height:1px;background:#626262;"></div>
<div style="left:563.6px;top:443.15px;width:25px;height:8.5px;border-radius:4.25px;background:#f8b400"></div>
<div style="left:580.60px;top:443.65px;width:7.5px;height:7.5px;border-radius:50%;background:#f4f4f4"></div>
<div class="t" style="left:597.6px;top:443.82px;font-size:6.635px;line-height:7.962px;color:#f0f0f0;font-weight:bold;transform:scaleX(0.8772);transform-origin:0 50%;-webkit-text-stroke:0.1px #f0f0f0;">ARMING</div>
<div class="t" style="left:683.7px;top:443.35px;font-size:6.588px;line-height:7.906px;color:#f0f0f0;font-weight:normal;transform:scaleX(0.9259);transform-origin:0 50%;-webkit-text-stroke:0.2px #f0f0f0;">Bip lors de l'armement du contrôleur de vol</div>
<div style="left:561.8px;top:454.50000000000006px;width:421.70000000000005px;height:1px;background:#626262;"></div>
<div style="left:563.6px;top:459.85px;width:25px;height:8.5px;border-radius:4.25px;background:#f8b400"></div>
<div style="left:580.60px;top:460.35px;width:7.5px;height:7.5px;border-radius:50%;background:#f4f4f4"></div>
<div class="t" style="left:597.6px;top:460.52px;font-size:6.635px;line-height:7.962px;color:#f0f0f0;font-weight:bold;transform:scaleX(0.8772);transform-origin:0 50%;-webkit-text-stroke:0.1px #f0f0f0;">ARMING_GPS_FIX</div>
<div class="t" style="left:683.7px;top:460.05px;font-size:6.588px;line-height:7.906px;color:#f0f0f0;font-weight:normal;transform:scaleX(0.9259);transform-origin:0 50%;-webkit-text-stroke:0.2px #f0f0f0;">Bips supplémentaires lors de l'armement quand le GPS est fixé</div>
<div style="left:561.8px;top:471.20000000000005px;width:421.70000000000005px;height:1px;background:#626262;"></div>
<div style="left:106px;top:462.6px;width:894px;height:20.4px;background:#555555;"></div>
<div style="left:900.6px;top:469px;width:97.4px;height:14px;background:#ffbb00;border-radius:2px 2px 0 0"></div>
<div class="t" style="left:900.6px;top:472.84px;font-size:6.600px;line-height:7.920px;color:#222;font-weight:bold;width:97.4px;text-align:center">Sauvegarder et Redémarrer</div>
</body></html>
